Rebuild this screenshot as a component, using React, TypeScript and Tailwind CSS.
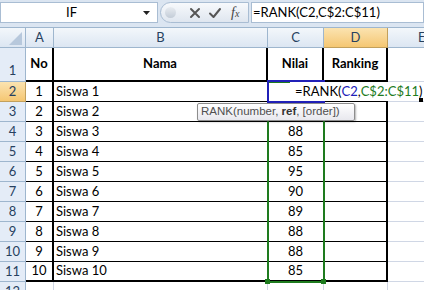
import React from "react";

// Lembar Excel 2007: rumus RANK sedang diketik di D2
const rows = [
  { no: 1, nama: "Siswa 1", nilai: "" },
  { no: 2, nama: "Siswa 2", nilai: "" },
  { no: 3, nama: "Siswa 3", nilai: "88" },
  { no: 4, nama: "Siswa 4", nilai: "85" },
  { no: 5, nama: "Siswa 5", nilai: "95" },
  { no: 6, nama: "Siswa 6", nilai: "90" },
  { no: 7, nama: "Siswa 7", nilai: "89" },
  { no: 8, nama: "Siswa 8", nilai: "88" },
  { no: 9, nama: "Siswa 9", nilai: "88" },
  { no: 10, nama: "Siswa 10", nilai: "85" },
];

const hdr = "bg-gradient-to-b from-[#f3f7fb] to-[#dce6f2] border-[#9eb6ce] text-[#27415f]";
const hdrActive = "bg-gradient-to-b from-[#fbe3b0] to-[#f5c772] border-[#c2a05c] text-[#27415f]";

function ColHeader({ label, active }: { label: string; active?: boolean }) {
  return (
    <div className={`flex items-center justify-center border-r border-b ${active ? hdrActive : hdr}`}>
      {label}
    </div>
  );
}

function RowHeader({ n, active, tall }: { n: number | string; active?: boolean; tall?: boolean }) {
  return (
    <div
      className={`flex justify-center border-r border-b ${tall ? "items-end pb-[1px]" : "items-center"} ${
        active ? hdrActive : "bg-[#e4ecf7] border-[#9eb6ce] text-[#27415f]"
      }`}
    >
      {n}
    </div>
  );
}

export default function App() {
  return (
    <div className="relative h-[290px] w-[424px] overflow-hidden bg-white font-['Lato','Liberation_Sans',sans-serif] text-[13px] text-black">
      {/* formula bar */}
      <div className="flex h-[28px] items-start gap-[2px] border-b border-[#9eb6ce] bg-[#dbe5f1] pt-[2px]">
        <div className="flex h-[21px] w-[158px] items-center border border-[#a9bdd3] bg-white">
          <span className="flex-1 pl-[3px] text-center">IF</span>
          <svg width="18" height="21" viewBox="0 0 18 21" className="shrink-0">
            <path d="M4 9h7l-3.5 4z" fill="#222" />
          </svg>
        </div>
        <div className="flex h-[21px] w-[89px] items-center rounded-l-full border border-[#a9bdd3] bg-gradient-to-b from-[#f7f9fc] to-[#dfe6ef]">
          <span className="ml-[4px] h-[11px] w-[11px] rounded-full bg-gradient-to-b from-[#e8ecf1] to-[#c3ccd7]" />
          <svg width="14" height="14" viewBox="0 0 14 14" className="ml-[12px]">
            <path d="M3 3l8 8M11 3l-8 8" stroke="#555" strokeWidth="2" strokeLinecap="round" />
          </svg>
          <svg width="14" height="14" viewBox="0 0 14 14" className="ml-[6px]">
            <path d="M2 7.5l3.5 3.5L12 3" stroke="#555" strokeWidth="2" fill="none" strokeLinecap="round" strokeLinejoin="round" />
          </svg>
          <span className="ml-[9px] font-['Liberation_Serif',serif] text-[14px] italic text-[#444]">
            f<span className="text-[10px]">x</span>
          </span>
        </div>
        <div className="flex h-[21px] flex-1 items-center border border-[#a9bdd3] bg-white pl-[1px]">
          =RANK(C2,C$2:C$11)
        </div>
      </div>

      {/* sheet grid */}
      <div className="grid h-[262px] grid-cols-[26px_28px_214px_56px_64px_1fr] grid-rows-[20px_34px_repeat(10,20px)_1fr]">
        <div className={`relative border-r border-b ${hdr}`}>
          <svg width="26" height="20" viewBox="0 0 26 20" className="absolute inset-0">
            <path d="M22 4v13H9z" fill="#b7c8dc" />
          </svg>
        </div>
        <ColHeader label="A" />
        <ColHeader label="B" />
        <ColHeader label="C" />
        <ColHeader label="D" active />
        <div className={`flex items-center border-b pl-[30px] ${hdr}`}>E</div>

        {/* row 1 */}
        <RowHeader n={1} tall />
        <div className="flex items-center justify-center border-r-2 border-b-2 border-black font-bold">No</div>
        <div className="flex items-center justify-center border-r-2 border-b-2 border-black font-bold">Nama</div>
        <div className="flex items-center justify-center border-r-2 border-b-2 border-black font-bold">Nilai</div>
        <div className="flex items-center justify-center border-r-2 border-b-2 border-black font-bold">Ranking</div>
        <div className="border-b border-[#d0d7e5]" />

        {rows.map((r, i) => {
          const last = i === rows.length - 1;
          const b = last ? "border-b-2" : "border-b";
          return (
            <React.Fragment key={r.no}>
              <RowHeader n={i + 2} active={i === 0} />
              <div className={`flex items-center justify-center border-r-2 ${b} border-black`}>{r.no}</div>
              <div className={`flex items-center border-r pl-[2px] ${b} border-black`}>{r.nama}</div>
              <div className={`flex items-center justify-center border-r ${b} border-black`}>{r.nilai}</div>
              <div className={`border-r-2 ${b} border-black`} />
              <div className="border-b border-[#d0d7e5]" />
            </React.Fragment>
          );
        })}

        {/* row 12 */}
        <RowHeader n={12} />
        <div className="border-r border-[#d0d7e5]" />
        <div className="border-r border-[#d0d7e5]" />
        <div className="border-r border-[#d0d7e5]" />
        <div className="border-r border-[#d0d7e5]" />
        <div />
      </div>

      {/* range C$2:C$11 */}
      <div className="absolute left-[267px] top-[81px] h-[202px] w-[58px] border-2 border-[#1e7b1e]" />
      <div className="absolute left-[265px] top-[279px] h-[5px] w-[5px] bg-[#1e7b1e]" />
      <div className="absolute left-[321px] top-[279px] h-[5px] w-[5px] bg-[#1e7b1e]" />
      {/* reference C2 */}
      <div className="absolute left-[267px] top-[80px] h-[23px] w-[58px] border-2 border-[#2020b8]" />

      {/* in-cell edit */}
      <div className="absolute left-[290px] top-[82px] flex h-[19px] w-[132px] items-center bg-white pl-[5px]">
        =RANK(<span className="text-[#2020b8]">C2</span>,<span className="text-[#1e7b1e]">C$2:C$11</span>)
      </div>
      <div className="absolute left-[419px] top-[98px] h-[4px] w-[4px] bg-black" />

      {/* function tooltip */}
      <div className="absolute left-[197px] top-[103px] flex h-[18px] w-[158px] items-center whitespace-pre rounded-[2px] border border-[#8d8d8d] bg-gradient-to-b from-white to-[#e8e8ee] pl-[3px] font-['Liberation_Sans',sans-serif] text-[11.5px] text-[#505050] shadow-[1px_1px_2px_rgba(0,0,0,0.3)]">
        RANK(number, <b className="text-[#333]">ref</b>, [order])
      </div>
    </div>
  );
}
